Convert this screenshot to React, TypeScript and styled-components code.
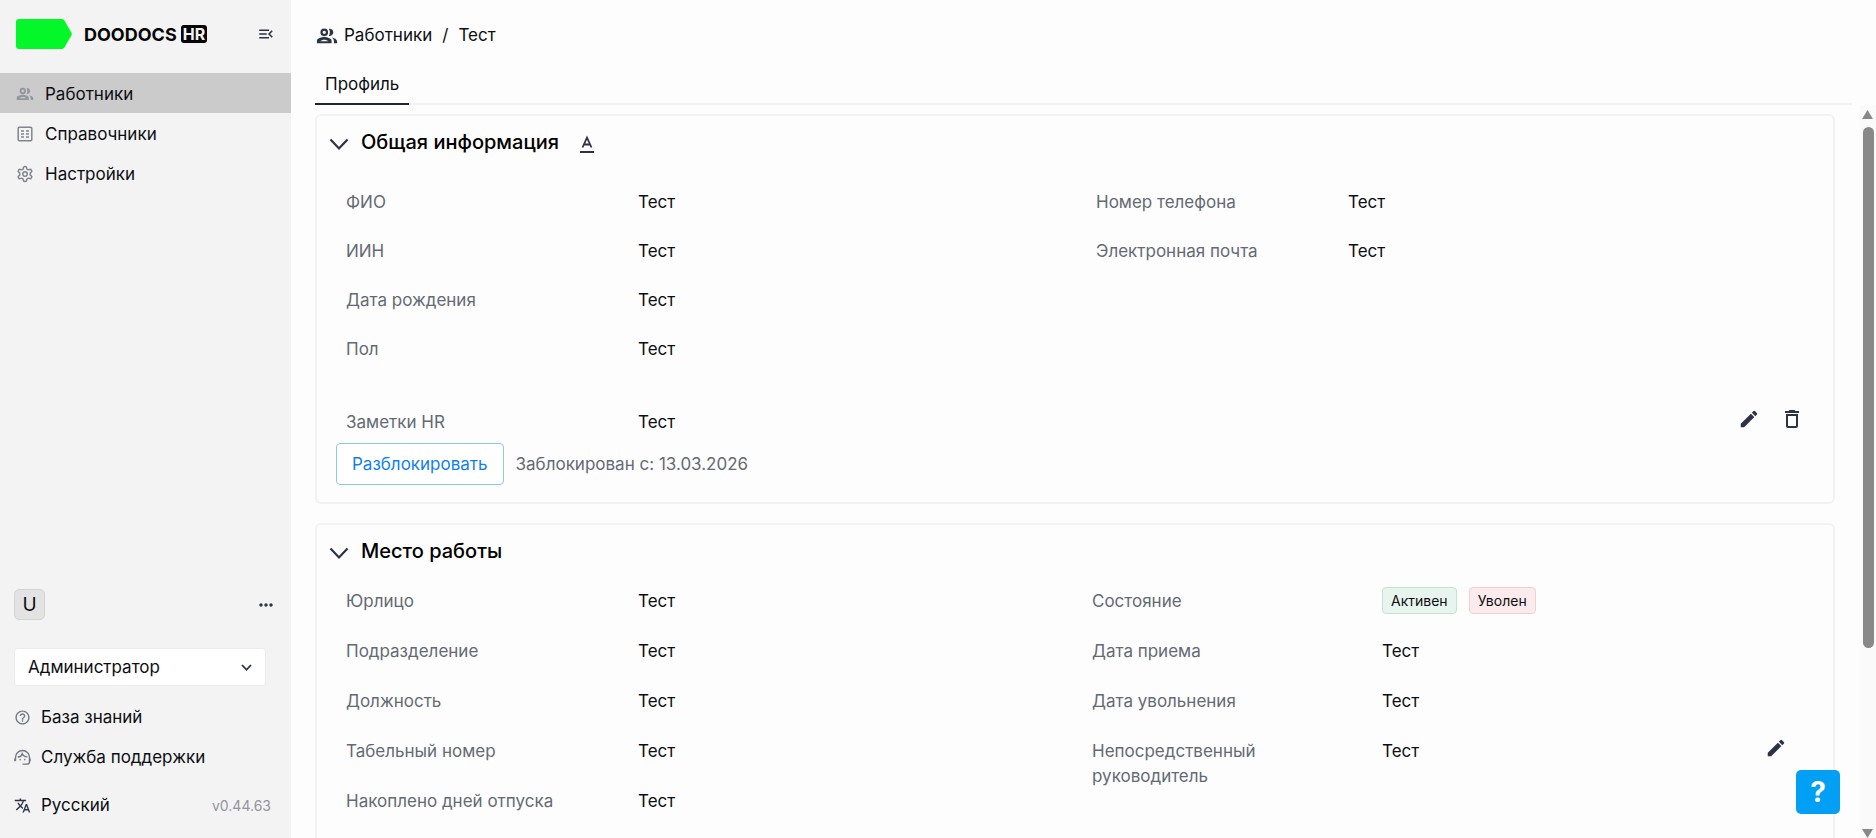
import React from 'react';
import styled, { createGlobalStyle } from 'styled-components';
import {
  MdDeleteOutline,
  MdEdit,
  MdHelpOutline,
  MdMenuOpen,
  MdMoreHoriz,
  MdTranslate,
} from 'react-icons/md';
import { LuSettings } from 'react-icons/lu';

const ink = '#0c0e12';
const slate = '#2c3345';
const muted = '#646a74';
const line = '#f2f2f3';

const GlobalStyle = createGlobalStyle`
  * { box-sizing: border-box; }
  body {
    margin: 0;
    background: #fdfdfd;
    color: ${ink};
    font-family: Inter, "Liberation Sans", sans-serif;
    font-size: 17px;
    line-height: 25px;
  }
  button, select { font: inherit; color: inherit; }
  a { color: inherit; text-decoration: none; }
`;

const Shell = styled.div`
  display: flex;
  height: 100vh;
`;

const Sidebar = styled.aside`
  display: flex;
  flex-direction: column;
  flex: 0 0 291px;
  background: #f3f3f3;
`;

const Brand = styled.div`
  display: flex;
  align-items: center;
  height: 73px;
  padding: 0 13px 5px 16px;
`;

const BrandMark = styled.svg`
  width: 56px;
  height: 30px;
  margin-right: 12px;
`;

const BrandName = styled.span`
  font-size: 18px;
  font-weight: 700;
  color: #060606;
`;

const BrandBadge = styled.span`
  margin-left: 4px;
  padding: 0 2px;
  border-radius: 3px;
  background: #060606;
  color: #f3f3f3;
  font-size: 16px;
  font-weight: 700;
  line-height: 18px;
`;

const IconButton = styled.button<{ $push?: boolean }>`
  display: flex;
  align-items: center;
  justify-content: center;
  width: 24px;
  height: 24px;
  margin-left: ${(p) => (p.$push ? 'auto' : '0')};
  padding: 0;
  border: 0;
  background: none;
  color: ${slate};
  cursor: pointer;
`;

const NavLink = styled.a<{ $active?: boolean }>`
  display: flex;
  align-items: center;
  gap: 11px;
  height: 40px;
  padding: 2px 0 0 16px;
  background: ${(p) => (p.$active ? '#cbcbcb' : 'transparent')};

  svg { width: 18px; height: 18px; color: ${(p) => (p.$active ? '#92969e' : '#80858f')}; }
`;

const SidebarFoot = styled.div`
  display: flex;
  flex-direction: column;
  margin-top: auto;
  padding: 0 13px 13px 14px;
`;

const UserRow = styled.div`
  display: flex;
  align-items: center;
  margin-bottom: 28px;
`;

const Avatar = styled.span`
  width: 31px;
  height: 31px;
  border: 1px solid #d4d4d4;
  border-radius: 5px;
  background: #e3e3e3;
  font-size: 19px;
  line-height: 29px;
  text-align: center;
`;

const SelectBox = styled.div`
  display: grid;
  align-items: center;
  margin: 0 12px 11px 0;

  & > * { grid-area: 1 / 1; }
  svg { justify-self: end; margin-right: 14px; pointer-events: none; color: ${slate}; }
`;

const RoleSelect = styled.select`
  width: 100%;
  height: 38px;
  padding: 0 36px 0 13px;
  border: 1px solid #ececec;
  border-radius: 4px;
  background: #fff;
  appearance: none;
`;

const FootLink = styled.a`
  display: flex;
  align-items: center;
  gap: 10px;
  height: 40px;

  svg { width: 17px; height: 17px; color: #737883; }
`;

const LanguageRow = styled.div`
  display: flex;
  align-items: center;
  justify-content: space-between;
  margin-top: 8px;
  padding-right: 7px;
`;

const LanguageButton = styled.button`
  display: flex;
  align-items: center;
  gap: 10px;
  height: 40px;
  padding: 0;
  border: 0;
  background: none;
  cursor: pointer;

  svg { width: 17px; height: 17px; color: ${slate}; }
`;

const Version = styled.span`
  color: #92959b;
  font-size: 14px;
`;

const Main = styled.main`
  display: flex;
  flex: 1;
  flex-direction: column;
  min-width: 0;
`;

const Breadcrumbs = styled.nav`
  display: flex;
  align-items: center;
  gap: 10px;
  padding: 23px 25px 20px;

  a { display: flex; align-items: center; gap: 6px; }
  svg { width: 22px; height: 22px; color: ${slate}; }
`;

const Tabs = styled.div`
  display: flex;
  margin: 0 24px;
  border-bottom: 2px solid ${line};
`;

const Tab = styled.button`
  height: 37px;
  margin-bottom: -2px;
  padding: 0 10px 3px;
  border: 0;
  border-bottom: 2px solid #22252c;
  background: none;
  cursor: pointer;
`;

const ScrollArea = styled.div`
  display: flex;
  flex: 1;
  min-height: 0;
`;

const Content = styled.div`
  flex: 1;
  min-width: 0;
  padding: 9px 25px 0 24px;
  overflow: hidden;
`;

const ScrollTrack = styled.div`
  display: flex;
  flex-direction: column;
  align-items: center;
  flex: 0 0 16px;
  padding: 5px 2px 0 0;
  background: #fafafa;

  svg { flex: none; width: 11px; height: 9px; fill: #888; }
`;

const ScrollRail = styled.div`
  flex: 1;
  align-self: stretch;
  margin: 8px 0 7px 2px;
`;

const ScrollThumb = styled.div`
  width: 11px;
  height: 75%;
  margin-left: 1px;
  border-radius: 6px;
  background: #888;
`;

const Card = styled.section<{ $bottom: number }>`
  margin-bottom: 19px;
  padding: 14px 20px ${(p) => p.$bottom}px 19px;
  border: 2px solid ${line};
  border-radius: 6px;
`;

const CardHead = styled.header<{ $space: number }>`
  display: flex;
  align-items: center;
  gap: 10px;
  margin: 0 0 ${(p) => p.$space}px -9px;
`;

const CardTitle = styled.h2`
  margin: 0 6px 0 0;
  font-size: 20px;
  font-weight: 450;
  line-height: 25px;
  color: #000;
`;

const Fields = styled.div`
  display: flex;
  padding-left: 10px;
`;

const FieldList = styled.dl<{ $label: number; $grow: number; $gap: number }>`
  display: grid;
  grid-template-columns: ${(p) => p.$label}px 1fr;
  flex: ${(p) => p.$grow} 1 0;
  align-content: start;
  row-gap: ${(p) => p.$gap}px;
  margin: 0;
`;

const Term = styled.dt`
  max-width: 190px;
  color: ${muted};
`;

const WideTerm = styled(Term)`
  max-width: none;
`;

const Value = styled.dd`
  display: flex;
  height: 25px;
  margin: 0;
`;

const NotesRow = styled.div`
  display: flex;
  align-items: flex-start;
  margin-top: 48px;
  padding-left: 10px;
`;

const NotesList = styled.dl`
  display: grid;
  grid-template-columns: 292px 1fr;
  flex: 1;
  margin: 0;
`;

const Actions = styled.div`
  display: flex;
  gap: 19px;
  margin-top: -3px;
  padding-right: 9px;
`;

const BlockRow = styled.div`
  display: flex;
  align-items: center;
  gap: 12px;
  margin-top: 8px;
  color: ${muted};
`;

const UnblockButton = styled.button`
  height: 42px;
  padding: 0 15px;
  border: 1px solid #8ac6fb;
  border-radius: 4px;
  background: #fff;
  color: #0f7ff0;
  cursor: pointer;
`;

const Tag = styled.span<{ $tone: 'green' | 'red' }>`
  height: 27px;
  margin: -2px 12px 0 0;
  padding: 0 8px;
  border: 1px solid ${(p) => (p.$tone === 'green' ? '#c2e4d4' : '#f4ced2')};
  border-radius: 4px;
  background: ${(p) => (p.$tone === 'green' ? '#e8f5ef' : '#fcebec')};
  font-size: 14px;
  line-height: 25px;
`;

const RowAction = styled.span`
  margin: -3px 25px 0 auto;
`;

const HelpButton = styled.button`
  position: fixed;
  right: 36px;
  bottom: 24px;
  width: 44px;
  height: 44px;
  padding: 0;
  border: 0;
  border-radius: 5px;
  background: #02a0f5;
  color: #fff;
  font-size: 28px;
  font-weight: 700;
  cursor: pointer;
`;

const PeopleIcon = () => (
  <svg viewBox="0 0 24 24" fill="none">
    <circle cx="9" cy="8" r="3" stroke="currentColor" strokeWidth="2.400" />
    <path
      fill="currentColor"
      d="M14 11.900a4 4 0 1 0 0-7.800c1.500 2.200 1.500 5.600 0 7.800zM17 13.600c1.600.9 2.600 2.200 2.600 4.400v2H23v-2c0-2.400-3-3.900-6-4.400z"
    />
    <path
      fill="currentColor"
      fillRule="evenodd"
      d="M9 13c-2.700 0-8 1.300-8 4v3h16v-3c0-2.700-5.300-4-8-4zm-4.500 4.700C5.500 16.600 7.500 16 9 16s3.500.6 4.500 1.700z"
    />
  </svg>
);

const Chevron = () => (
  <svg width="20" height="20" viewBox="0 0 20 20" fill="none" stroke={slate} strokeWidth="2.2">
    <path d="M1.500 6.500 10 15.500 18.500 6.500" />
  </svg>
);

const SmallChevron = () => (
  <svg width="11" height="11" viewBox="0 0 11 11" fill="none" stroke="currentColor" strokeWidth="1.8">
    <path d="M1 3 5.500 7.800 10 3" />
  </svg>
);

const ListIcon = () => (
  <svg viewBox="0 0 18 18" fill="none" stroke="currentColor" strokeWidth="1.500">
    <rect x="2.200" y="2.200" width="13.600" height="13.600" rx="1.200" />
    <path d="M5 6h3M10 6h3M5 9h3M10 9h3M5 12h3M10 12h3" />
  </svg>
);

const TextColorIcon = () => (
  <svg width="16" height="20" viewBox="0 0 16 20" fill="none" stroke={slate} strokeWidth="1.8">
    <path d="M3.500 14.500 8 4.600 12.500 14.500M5 11.500h6M1 19h14" />
  </svg>
);

const SupportIcon = () => (
  <svg viewBox="0 0 18 18" fill="none" stroke="currentColor" strokeWidth="1.500" strokeLinecap="round">
    <path d="M1.600 12V9a7.400 7.400 0 0 1 14.800 0v4.500a2.500 2.500 0 0 1-2.500 2.500H9.500" />
    <path d="M4.500 8.500C7 8.200 8.200 6.800 8.700 5c1 2 2.600 3.200 5 3.300" />
    <path d="M6.500 11v.4M11.300 11v.4M1 10.500v2M17 10.500v2" />
  </svg>
);

const test = 'Тест';

const personal = ['ФИО', 'ИИН', 'Дата рождения', 'Пол'];
const contacts = ['Номер телефона', 'Электронная почта'];
const position = ['Юрлицо', 'Подразделение', 'Должность', 'Табельный номер', 'Накоплено дней отпуска'];
const dates = ['Дата приема', 'Дата увольнения'];

const Rows = ({ names }: { names: string[] }) => (
  <>
    {names.map((name) => (
      <React.Fragment key={name}>
        <WideTerm>{name}</WideTerm>
        <Value>{test}</Value>
      </React.Fragment>
    ))}
  </>
);

export default function App() {
  return (
    <>
      <GlobalStyle />
      <Shell>
        <Sidebar>
          <Brand>
            <BrandMark viewBox="0 0 56 30" aria-hidden="true">
              <path
                d="M3 0h43q1.500 0 2.400 1.400l7 12.200q.8 1.400 0 2.800l-7 12.200Q47.500 30 46 30H3q-3 0-3-3V3q0-3 3-3z"
                fill="#04f829"
              />
            </BrandMark>
            <BrandName>DOODOCS</BrandName>
            <BrandBadge>HR</BrandBadge>
            <IconButton $push aria-label="Свернуть меню">
              <MdMenuOpen size={18} />
            </IconButton>
          </Brand>
          <nav>
            <NavLink href="#employees" $active>
              <PeopleIcon />
              Работники
            </NavLink>
            <NavLink href="#catalogs">
              <ListIcon />
              Справочники
            </NavLink>
            <NavLink href="#settings">
              <LuSettings />
              Настройки
            </NavLink>
          </nav>
          <SidebarFoot>
            <UserRow>
              <Avatar>U</Avatar>
              <IconButton $push aria-label="Ещё">
                <MdMoreHoriz size={20} />
              </IconButton>
            </UserRow>
            <SelectBox>
              <RoleSelect aria-label="Роль">
                <option>Администратор</option>
              </RoleSelect>
              <SmallChevron />
            </SelectBox>
            <FootLink href="#docs">
              <MdHelpOutline />
              База знаний
            </FootLink>
            <FootLink href="#support">
              <SupportIcon />
              Служба поддержки
            </FootLink>
            <LanguageRow>
              <LanguageButton>
                <MdTranslate />
                Русский
              </LanguageButton>
              <Version>v0.44.63</Version>
            </LanguageRow>
          </SidebarFoot>
        </Sidebar>

        <Main>
          <Breadcrumbs>
            <a href="#employees">
              <PeopleIcon />
              Работники
            </a>
            <span>/</span>
            <span>{test}</span>
          </Breadcrumbs>
          <Tabs role="tablist">
            <Tab role="tab" aria-selected="true">
              Профиль
            </Tab>
          </Tabs>
          <ScrollArea>
            <Content>
              <Card $bottom={17}>
                <CardHead $space={35}>
                  <IconButton aria-label="Свернуть раздел">
                    <Chevron />
                  </IconButton>
                  <CardTitle>Общая информация</CardTitle>
                  <IconButton aria-label="Цвет текста">
                    <TextColorIcon />
                  </IconButton>
                </CardHead>
                <Fields>
                  <FieldList $label={292} $grow={750} $gap={24}>
                    <Rows names={personal} />
                  </FieldList>
                  <FieldList $label={252} $grow={717} $gap={24}>
                    <Rows names={contacts} />
                  </FieldList>
                </Fields>
                <NotesRow>
                  <NotesList>
                    <WideTerm>Заметки HR</WideTerm>
                    <Value>{test}</Value>
                  </NotesList>
                  <Actions>
                    <IconButton aria-label="Редактировать заметку">
                      <MdEdit size={22} />
                    </IconButton>
                    <IconButton aria-label="Удалить заметку">
                      <MdDeleteOutline size={24} />
                    </IconButton>
                  </Actions>
                </NotesRow>
                <BlockRow>
                  <UnblockButton>Разблокировать</UnblockButton>
                  <span>Заблокирован с: 13.03.2026</span>
                </BlockRow>
              </Card>

              <Card $bottom={40}>
                <CardHead $space={25}>
                  <IconButton aria-label="Свернуть раздел">
                    <Chevron />
                  </IconButton>
                  <CardTitle>Место работы</CardTitle>
                </CardHead>
                <Fields>
                  <FieldList $label={292} $grow={746} $gap={25}>
                    <Rows names={position} />
                  </FieldList>
                  <FieldList $label={290} $grow={721} $gap={25}>
                    <Term>Состояние</Term>
                    <Value>
                      <Tag $tone="green">Активен</Tag>
                      <Tag $tone="red">Уволен</Tag>
                    </Value>
                    <Rows names={dates} />
                    <Term>Непосредственный руководитель</Term>
                    <Value>
                      {test}
                      <RowAction>
                        <IconButton aria-label="Редактировать руководителя">
                          <MdEdit size={22} />
                        </IconButton>
                      </RowAction>
                    </Value>
                  </FieldList>
                </Fields>
              </Card>
            </Content>
            <ScrollTrack aria-hidden="true">
              <svg viewBox="0 0 11 9">
                <path d="M5.500 0 11 9H0z" />
              </svg>
              <ScrollRail>
                <ScrollThumb />
              </ScrollRail>
              <svg viewBox="0 0 11 9">
                <path d="M0 0h11L5.500 9z" />
              </svg>
            </ScrollTrack>
          </ScrollArea>
        </Main>
        <HelpButton aria-label="Помощь">?</HelpButton>
      </Shell>
    </>
  );
}
